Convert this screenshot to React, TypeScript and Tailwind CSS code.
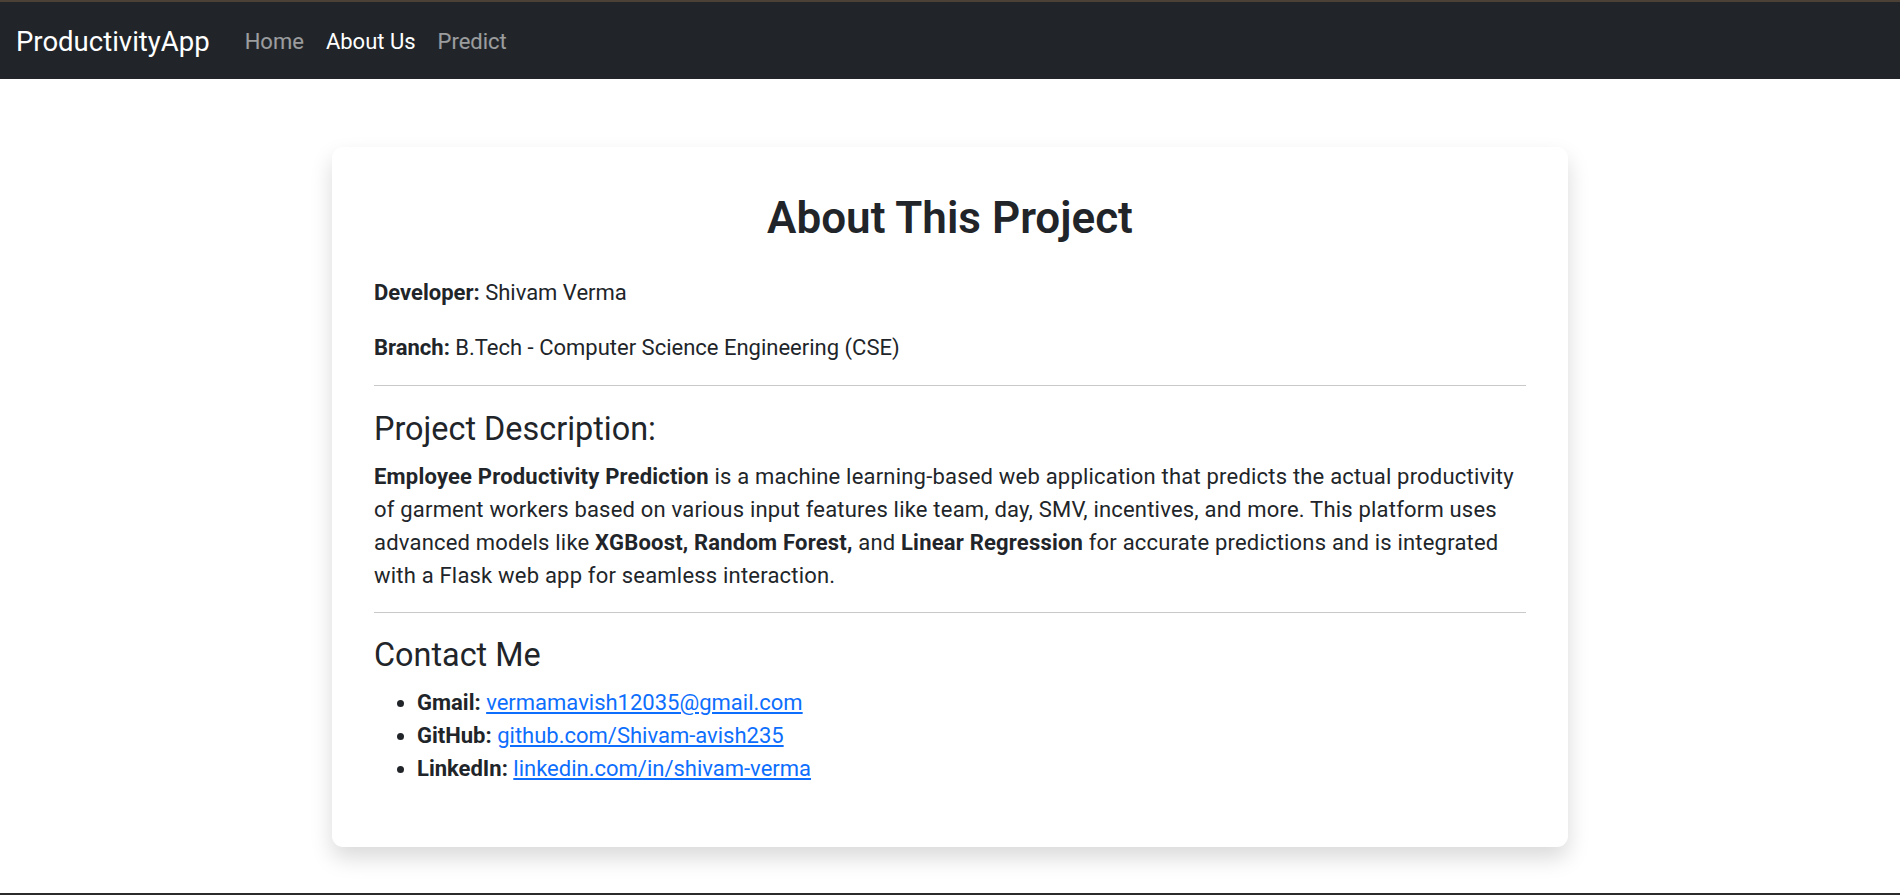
const navLinks = [
  { label: "Home", active: false },
  { label: "About Us", active: true },
  { label: "Predict", active: false },
];

const contacts = [
  { label: "Gmail:", text: "vermamavish12035@gmail.com", href: "mailto:vermamavish12035@gmail.com" },
  { label: "GitHub:", text: "github.com/Shivam-avish235", href: "#" },
  { label: "LinkedIn:", text: "linkedin.com/in/shivam-verma", href: "#" },
];

function Navbar() {
  return (
    <nav className="h-[77px] bg-[#212529] flex items-center px-[16px] pt-[3px]">
      <a href="#" className="text-[27.5px] text-white mr-[24px] leading-[40px]">
        ProductivityApp
      </a>
      <ul className="flex items-center">
        {navLinks.map((link) => (
          <li key={link.label}>
            <a
              href="#"
              className={
                link.active
                  ? "block px-[11px] py-[11px] text-[22px] leading-[32px] text-white"
                  : "block px-[11px] py-[11px] text-[22px] leading-[32px] text-white/55"
              }
            >
              {link.label}
            </a>
          </li>
        ))}
      </ul>
    </nav>
  );
}

export default function App() {
  return (
    <div
      className="min-h-[895px] flex flex-col bg-white text-[#212529]"
      style={{ fontFamily: "'Segoe UI', Roboto, 'Liberation Sans', sans-serif" }}
    >
      <div className="h-[2px] bg-[#4b4137]" />
      <Navbar />

      <main className="flex-1">
        <div className="w-[1236px] mx-auto mt-[68px] bg-white rounded-[11px] shadow-[0_11px_22px_rgba(0,0,0,0.15)] pt-[42px] px-[42px] pb-[42px]">
          <h2 className="text-[44px] leading-[58px] font-semibold text-center mb-[29px]">
            About This Project
          </h2>

          <p className="text-[22px] leading-[33px] mb-[22px]">
            <strong className="font-bold">Developer:</strong> Shivam Verma
          </p>
          <p className="text-[22px] leading-[33px] mb-[21px]">
            <strong className="font-bold">Branch:</strong> B.Tech - Computer Science Engineering (CSE)
          </p>

          <hr className="mb-[24px] border-t border-[#c8c9ca]" />

          <h4 className="text-[32.4px] leading-[39px] mb-[11px]">Project Description:</h4>
          <p className="text-[22px] leading-[33px] tracking-[0.2px] mb-[20px]">
            <strong className="font-bold">Employee Productivity Prediction</strong> is a machine
            learning-based web application that predicts the actual productivity of garment workers
            based on various input features like team, day, SMV, incentives, and more. This platform
            uses advanced models like <strong className="font-bold">XGBoost, Random Forest,</strong>{" "}
            and <strong className="font-bold">Linear Regression</strong> for accurate predictions and
            is integrated with a Flask web app for seamless interaction.
          </p>

          <hr className="mb-[23px] border-t border-[#c8c9ca]" />

          <h4 className="text-[32.4px] leading-[39px] mb-[11px]">Contact Me</h4>
          <ul className="list-disc pl-[43px] mb-[20px] text-[22px] leading-[33px]">
            {contacts.map((c) => (
              <li key={c.label}>
                <strong className="font-bold">{c.label}</strong>{" "}
                <a href={c.href} className="text-[#0d6efd] underline">
                  {c.text}
                </a>
              </li>
            ))}
          </ul>
        </div>
      </main>

      <div className="h-[2px] bg-[#2b2b2b]" />
    </div>
  );
}
